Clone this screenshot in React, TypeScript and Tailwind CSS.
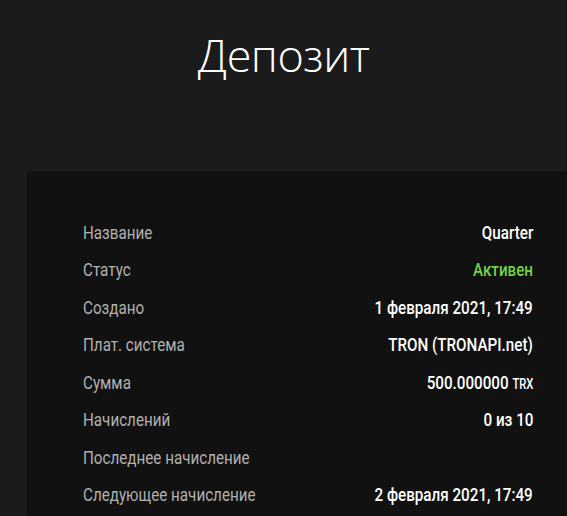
const rows: { label: string; value?: React.ReactNode; green?: boolean }[] = [
  { label: "Название", value: "Quarter" },
  { label: "Статус", value: "Активен", green: true },
  { label: "Создано", value: "1 февраля 2021, 17:49" },
  { label: "Плат. система", value: "TRON (TRONAPI.net)" },
  {
    label: "Сумма",
    value: (
      <>
        500.000000 <span className="text-[14px]">TRX</span>
      </>
    ),
  },
  { label: "Начислений", value: "0 из 10" },
  { label: "Последнее начисление" },
  { label: "Следующее начисление", value: "2 февраля 2021, 17:49" },
];

export default function App() {
  return (
    <div className="min-h-[516px] w-full overflow-hidden bg-[#1b1b1b]">
      <h1 className="h-[171px] pt-[20px] text-center font-['Open_Sans',sans-serif] text-[45px] font-light leading-[70px] tracking-[-0.5px] text-white">
        Депозит
      </h1>

      {/* таблица деталей, узкий шрифт имитируем сжатием */}
      <div className="ml-[27px] bg-[#111111] pl-14 pr-[34px] pt-[43px] pb-4 font-['Roboto',sans-serif]">
        {rows.map((r) => (
          <div key={r.label} className="flex h-[37.5px] items-center justify-between whitespace-nowrap text-[19px]">
            <span className="inline-block origin-left scale-x-[0.8] text-[#b0b0b0]">{r.label}</span>
            <span
              className={
                "inline-block origin-right scale-x-[0.8] font-medium " +
                (r.green ? "text-[#76d248]" : "text-white")
              }
            >
              {r.value}
            </span>
          </div>
        ))}
      </div>
    </div>
  );
}
